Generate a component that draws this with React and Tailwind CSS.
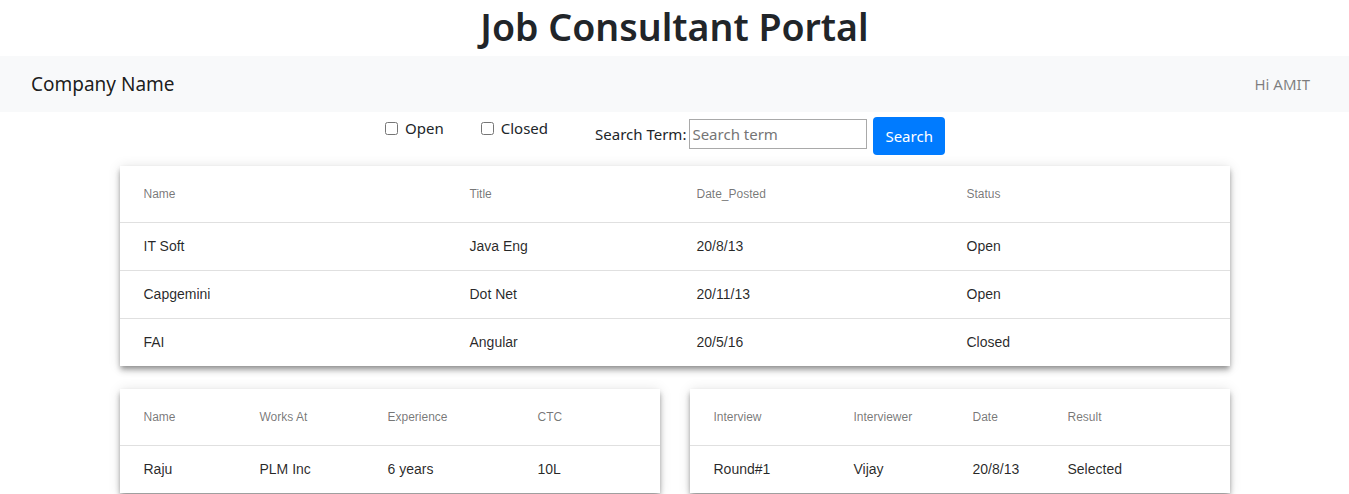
import { useState } from "react";

const jobs = [
  { name: "IT Soft", title: "Java Eng", date: "20/8/13", status: "Open" },
  { name: "Capgemini", title: "Dot Net", date: "20/11/13", status: "Open" },
  { name: "FAI", title: "Angular", date: "20/5/16", status: "Closed" },
];

const candidates = [{ name: "Raju", worksAt: "PLM Inc", experience: "6 years", ctc: "10L" }];

const interviews = [{ round: "Round#1", interviewer: "Vijay", date: "20/8/13", result: "Selected" }];

const paper =
  "bg-white shadow-[0px_3px_5px_-1px_rgba(0,0,0,0.3),0px_5px_6px_0px_rgba(0,0,0,0.16),0px_1px_12px_0px_rgba(0,0,0,0.12)] font-['Liberation_Sans',Arial,sans-serif]";

function DataTable({ widths, headers, rows, className = "" }) {
  return (
    <div className={`${paper} ${className}`}>
      <table className="w-full table-fixed border-collapse">
        <colgroup>
          {widths.map((w, i) => (
            <col key={i} style={{ width: w }} />
          ))}
        </colgroup>
        <thead>
          <tr className="h-[56px] border-b border-[#e0e0e0]">
            {headers.map((h) => (
              <th key={h} className="pl-6 text-left text-[12px] font-normal text-black/55">
                {h}
              </th>
            ))}
          </tr>
        </thead>
        <tbody>
          {rows.map((r, i) => (
            <tr key={i} className="h-[48px] border-b border-[#e0e0e0] last:border-0">
              {r.map((c, j) => (
                <td key={j} className="pl-6 text-[14px] text-black/85">
                  {c}
                </td>
              ))}
            </tr>
          ))}
        </tbody>
      </table>
    </div>
  );
}

export default function App() {
  const [open, setOpen] = useState(false);
  const [closed, setClosed] = useState(false);
  const [term, setTerm] = useState("");

  return (
    <div className="min-h-screen bg-white font-['Noto_Sans','Open_Sans',sans-serif] text-[#212529]">
      <h1 className="text-center text-[37.5px] font-semibold leading-[48px] pt-[3px] h-[56px]">Job Consultant Portal</h1>

      <nav className="h-[56px] bg-[#f8f9fa] flex items-center justify-between pl-[31px] pr-[39px]">
        <span className="text-[19px] text-black/90">Company Name</span>
        <span className="text-[15px] text-black/50">Hi AMIT</span>
      </nav>

      <div className="flex justify-center items-start pt-[5px] h-[54px] pr-[19px]">
        <label className="flex items-center text-[15px]">
          <input type="checkbox" checked={open} onChange={(e) => setOpen(e.target.checked)} className="w-[13px] h-[13px] mr-[7px]" />
          Open
        </label>
        <label className="flex items-center ml-[37px] text-[15px]">
          <input type="checkbox" checked={closed} onChange={(e) => setClosed(e.target.checked)} className="w-[13px] h-[13px] mr-[7px]" />
          Closed
        </label>
        <div className="flex items-center ml-[47px] mt-[2px]">
          <span className="text-[15px] mr-[3px]">Search Term:</span>
          <input
            value={term}
            onChange={(e) => setTerm(e.target.value)}
            placeholder="Search term"
            className="w-[178px] h-[30px] border border-[#a9a9a9] px-[2px] text-[15px] placeholder:text-[#757575] outline-none"
          />
        </div>
        <button className="ml-[6px] h-[38px] px-3 rounded bg-[#007bff] text-white text-[15px]">Search</button>
      </div>

      <div className="w-[1110px] mx-auto">
        <DataTable
          widths={[326, 227, 270, 287]}
          headers={["Name", "Title", "Date_Posted", "Status"]}
          rows={jobs.map((j) => [j.name, j.title, j.date, j.status])}
        />

        <div className="flex gap-[30px] mt-[23px]">
          <DataTable
            className="w-[540px]"
            widths={[116, 128, 150, 146]}
            headers={["Name", "Works At", "Experience", "CTC"]}
            rows={candidates.map((c) => [c.name, c.worksAt, c.experience, c.ctc])}
          />
          <DataTable
            className="w-[540px]"
            widths={[140, 119, 95, 186]}
            headers={["Interview", "Interviewer", "Date", "Result"]}
            rows={interviews.map((v) => [v.round, v.interviewer, v.date, v.result])}
          />
        </div>
      </div>
    </div>
  );
}
